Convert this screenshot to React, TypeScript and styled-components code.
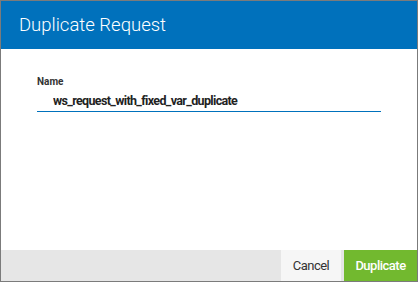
import styled, { createGlobalStyle } from "styled-components";

const GlobalStyle = createGlobalStyle`
  html, body {
    margin: 0;
    padding: 0;
    background: #ffffff;
  }
  body {
    font-family: Roboto, "Liberation Sans", sans-serif;
  }
`;

const Dialog = styled.div`
  width: 418px;
  height: 282px;
  box-sizing: border-box;
  border: 1px solid #7b7b7b;
  display: flex;
  flex-direction: column;
  background: #ffffff;
`;

const Header = styled.div`
  height: 48px;
  background: #0071bc;
  display: flex;
  align-items: center;
  padding-left: 18px;
`;

const Title = styled.h1`
  margin: 0;
  font-size: 18.5px;
  font-weight: 300;
  color: #ffffff;
`;

const Body = styled.div`
  flex: 1;
  padding: 27px 36px 0 36px;
`;

const Label = styled.label`
  display: block;
  font-size: 10px;
  font-weight: 700;
  color: #333333;
  line-height: 12px;
`;

const Input = styled.input`
  display: block;
  width: 100%;
  box-sizing: border-box;
  margin-top: 5px;
  padding: 0 0 2px 16px;
  border: none;
  border-bottom: 1px solid #0071bc;
  font-family: Roboto, "Liberation Sans", sans-serif;
  font-size: 12.5px;
  font-weight: 700;
  color: #222222;
  line-height: 16px;
  letter-spacing: -0.65px;
  outline: none;
  background: transparent;
  caret-color: #222222;
`;

const Footer = styled.div`
  height: 31px;
  background: #e6e6e6;
  display: flex;
  justify-content: flex-end;
  gap: 3px;
`;

const Button = styled.button<{ $primary?: boolean }>`
  border: none;
  margin: 0;
  font-family: Roboto, "Liberation Sans", sans-serif;
  font-size: 13px;
  letter-spacing: -0.5px;
  font-weight: ${(p) => (p.$primary ? 500 : 400)};
  color: ${(p) => (p.$primary ? "#ffffff" : "#333333")};
  background: ${(p) => (p.$primary ? "#72b92f" : "#f6f6f6")};
  width: ${(p) => (p.$primary ? "73px" : "60px")};
  padding: 0;
  cursor: pointer;
`;

export default function App() {
  return (
    <>
      <GlobalStyle />
      <Dialog>
        <Header>
          <Title>Duplicate Request</Title>
        </Header>
        <Body>
          <Label>Name</Label>
          <Input defaultValue="ws_request_with_fixed_var_duplicate" autoFocus />
        </Body>
        <Footer>
          <Button>Cancel</Button>
          <Button $primary>Duplicate</Button>
        </Footer>
      </Dialog>
    </>
  );
}
